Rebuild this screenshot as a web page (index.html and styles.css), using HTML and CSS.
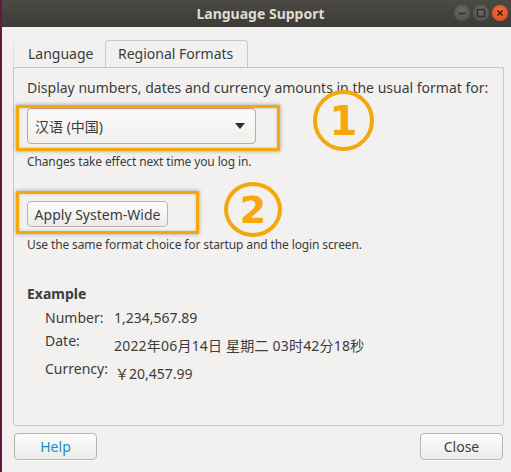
FILE: index.html
```html
<!DOCTYPE html>
<html>
<head>
<meta charset="utf-8">
<link rel="stylesheet" href="styles.css">
</head>
<body>
<div class="window">
  <div class="titlebar">
    <span class="title">Language Support</span>
    <div class="wbtns">
      <span class="wbtn"><svg width="16" height="16" viewBox="0 0 16 16"><line x1="4.5" y1="8.5" x2="11.5" y2="8.5" stroke="#2f2f2c" stroke-width="1.6"/></svg></span>
      <span class="wbtn"><svg width="16" height="16" viewBox="0 0 16 16"><rect x="4.5" y="4.5" width="7" height="7" fill="none" stroke="#2f2f2c" stroke-width="1.4"/></svg></span>
      <span class="wbtn close"><svg width="16" height="16" viewBox="0 0 16 16"><path d="M5.5 5.5 L10.5 10.5 M10.5 5.5 L5.5 10.5" stroke="#3a1a0e" stroke-width="1.5"/></svg></span>
    </div>
  </div>
  <div class="body">
    <div class="tabs">
      <div class="tab">Language</div>
      <div class="tab active">Regional Formats</div>
    </div>
    <div class="frame">
      <p class="lead">Display numbers, dates and currency amounts in the usual format for:</p>
      <div class="row combo-row">
        <div class="combo"><span>汉语 (中国)</span><svg class="arrow" width="10" height="6" viewBox="0 0 10 6"><path d="M0 0 H10 L5 6 Z" fill="#2d2d2d"/></svg></div>
        <div class="hl hl1"></div>
        <div class="num num1">1</div>
      </div>
      <p class="note">Changes take effect next time you log in.</p>
      <div class="row apply-row">
        <button class="btn apply">Apply System-Wide</button>
        <div class="hl hl2"></div>
        <div class="num num2">2</div>
      </div>
      <p class="note note2">Use the same format choice for startup and the login screen.</p>
      <h3 class="ex-title">Example</h3>
      <div class="ex">
        <span class="lbl">Number:</span><span class="val">1,234,567.89</span>
        <span class="lbl">Date:</span><span class="val down date">2022年06月14日 星期二 03时42分18秒</span>
        <span class="lbl">Currency:</span><span class="val down cur">￥20,457.99</span>
      </div>
    </div>
    <div class="actions">
      <button class="btn foot help">Help</button>
      <button class="btn foot">Close</button>
    </div>
  </div>
</div>
</body>
</html>
```
FILE: styles.css
```css
html, body {
  margin: 0;
  padding: 0;
  background: #5e1c3e;
}
body {
  width: 511px;
  height: 472px;
  overflow: hidden;
  font-family: "Noto Sans", "Noto Sans CJK SC", sans-serif;
  color: #3c3c3c;
}
.window {
  margin-left: 2px;
  width: 509px;
  height: 472px;
  background: #f2f1f0;
  display: flex;
  flex-direction: column;
}
.titlebar {
  height: 27px;
  background: linear-gradient(#4c4a45, #3c3b37);
  display: flex;
  align-items: center;
  justify-content: center;
  position: relative;
}
.title {
  color: #dfdbd2;
  font-weight: bold;
  font-size: 14px;
  margin-left: 8px;
}
.wbtns {
  position: absolute;
  right: 3px;
  top: 5px;
  display: flex;
  gap: 3px;
}
.wbtn {
  width: 16px;
  height: 16px;
  border-radius: 50%;
  background: radial-gradient(circle at 50% 35%, #6a6964, #4f4e4a);
  display: flex;
}
.wbtn.close {
  background: radial-gradient(circle at 50% 35%, #f2693a, #e0481b);
}
.body {
  flex: 1;
  padding: 13px 8px 0 11px;
  display: flex;
  flex-direction: column;
}
.tabs {
  display: flex;
  height: 27px;
  font-size: 14px;
}
.tab {
  padding: 0 14px;
  line-height: 27px;
  width: 63px;
  border-left: 1px solid #e4e1de;
  border-top-left-radius: 3px;
}
.tab.active {
  width: auto;
  padding: 0 14px 0 12px;
  border: 1px solid #cdc8c3;
  border-bottom: none;
  border-radius: 4px 4px 0 0;
  line-height: 26px;
}
.frame {
  border: 1px solid #cdc8c3;
  border-radius: 0 2px 3px 3px;
  height: 357px;
  padding: 0 13px;
  margin-right: -1px;
}
p { margin: 0; }
.lead {
  font-size: 14px;
  line-height: 20px;
  margin-top: 10px;
  letter-spacing: 0;
}
.row {
  position: relative;
  display: flex;
}
.combo-row { margin-top: 10px; }
.combo {
  border: 1px solid #dc9f8c;
  border-radius: 4px;
  background: linear-gradient(#fbfbfa, #f0efee);
  display: flex;
  align-items: center;
  justify-content: space-between;
  padding: 0 7px;
  box-sizing: border-box;
  font-size: 14px;
  width: 229px;
  height: 36px;
}
.arrow { margin-right: 3px; }
.hl {
  position: absolute;
  border: 3px solid #f5a70b;
  box-shadow: 0 0 4px rgba(0,0,0,0.35), inset 0 0 3px rgba(0,0,0,0.2);
}
.hl1 { left: -11px; top: -3px; width: 258px; height: 40px; }
.hl2 { left: -11px; top: -10px; width: 177px; height: 37px; }
.num {
  position: absolute;
  box-sizing: border-box;
  border: 4px solid #f5a70b;
  border-radius: 50%;
  color: #f5a70b;
  font-family: "DejaVu Sans", sans-serif;
  font-weight: bold;
  font-size: 40px;
  display: flex;
  align-items: center;
  justify-content: center;
}
.num1 { left: 286px; top: -18px; width: 61px; height: 61px; }
.num2 { left: 197px; top: -19px; width: 58px; height: 55px; font-size: 38px; }
.note {
  font-size: 12px;
  line-height: 16px;
  margin-top: 10px;
  letter-spacing: -0.12px;
}
.apply-row { margin-top: 31px; }
.btn {
  font-family: inherit;
  color: #3c3c3c;
  font-size: 14px;
  border: 1px solid #b9b4ae;
  border-radius: 4px;
  background: linear-gradient(#fcfcfc, #ecebea);
  padding: 0;
  box-shadow: 0 1px 0 rgba(255,255,255,0.6);
}
.apply { width: 141px; height: 26px; }
.note2 { margin-top: 10px; }
.ex-title {
  font-size: 14px;
  font-weight: bold;
  margin: 32px 0 0 0;
  line-height: 18px;
}
.ex {
  display: grid;
  grid-template-columns: 69px auto;
  margin-left: 18px;
  margin-top: 5px;
  font-size: 14px;
  row-gap: 3px;
}
.lbl { line-height: 20px; }
.val { line-height: 20px; }
.val.down { padding-top: 5px; }
.date { letter-spacing: 0.2px; }
.cur { margin-left: 1px; }
.actions {
  display: flex;
  justify-content: space-between;
  margin-top: 7px;
  padding-left: 1px;
}
.foot { width: 83px; height: 27px; }
.help { color: #1a8ccb; }
```
